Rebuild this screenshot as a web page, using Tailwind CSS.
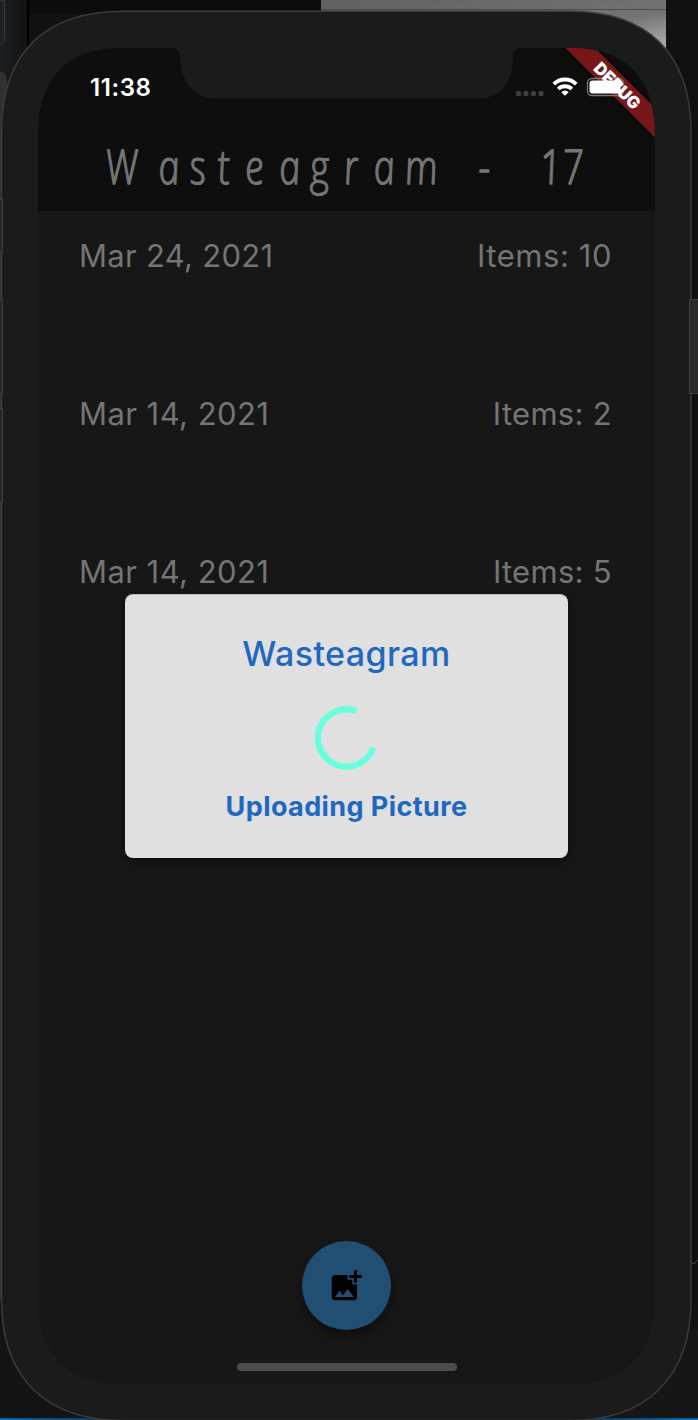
<!DOCTYPE html>
<html lang="en">
<head>
<meta charset="utf-8">
<title>Wasteagram</title>
<script src="https://cdn.jsdelivr.net/npm/@tailwindcss/browser@4"></script>
</head>
<body class="w-[698px] h-[1420px] overflow-hidden bg-[#121212] font-['Inter',sans-serif]">
<div class="relative w-[698px] h-[1420px] overflow-hidden">
  <!-- desktop and phone body -->
  <svg class="absolute inset-0" width="698" height="1420" viewBox="0 0 698 1420">
    <defs>
      <linearGradient id="gl" x1="0" x2="1"><stop offset="0" stop-color="#1c1e20"/><stop offset="1" stop-color="#111314"/></linearGradient>
      <linearGradient id="gr" x1="0" x2="1" y1="0" y2="1"><stop offset="0" stop-color="#606062"/><stop offset=".6" stop-color="#747476"/><stop offset="1" stop-color="#c4c4c4"/></linearGradient>
      <linearGradient id="blL" x1="0" x2="1"><stop offset="0" stop-color="#0866ad"/><stop offset="1" stop-color="#07365b"/></linearGradient>
      <linearGradient id="blR" x1="0" x2="1"><stop offset="0" stop-color="#07365b"/><stop offset="1" stop-color="#0866ad"/></linearGradient>
    </defs>
    <rect width="698" height="1420" fill="#111"/>
    <rect width="27" height="200" fill="url(#gl)"/>
    <path d="M0 0H4.500V38Q4.500 43 0 45" fill="#202122" stroke="#393a3b"/>
    <path d="M0 71Q7 73 7 81V130H0Z" fill="#303132"/>
    <rect x="27" width="2" height="60" fill="#000"/>
    <rect x="29" width="292" height="14" fill="#0c0c0c"/>
    <rect x="321" width="345" height="60" fill="url(#gr)"/>
    <rect x="321" y="9" width="345" height="1" fill="#4c4c4d"/>
    <rect x="666" width="32" height="300" fill="#111"/>
    <path d="M690 1264Q696 1264 698 1260" fill="none" stroke="#444"/>
    <rect y="1330" width="120" height="90" fill="#141414"/>
    <rect x="600" y="1330" width="98" height="90" fill="#161616"/>
    <rect y="1418" width="110" height="2" fill="url(#blL)"/>
    <rect x="580" y="1418" width="118" height="2" fill="url(#blR)"/>
    <rect y="130" width="2" height="1170" fill="#303030"/>
    <path d="M1.500 132C1.500 52 46 11.200 123 11.200H570C646 11.200 691 52 691 132V1300C691 1378 646 1420.500 570 1420.500H123C46 1420.500 1.500 1378 1.500 1300Z" fill="#1b1b1b" stroke="#3b3b3b" stroke-width="1.500"/>
    <g fill="#282828" stroke="#404040">
      <path d="M0 199.500H2.500V252.500H0"/><path d="M0 299.500H2.500V393.500H0"/><path d="M0 408.500H2.500V502.500H0"/>
      <rect x="689.500" y="299.500" width="10" height="94"/>
    </g>
    <!-- screen -->
    <path d="M38 135C38 78 68 48 120 48H573C625 48 655 78 655 135V1300C655 1353 625 1384 573 1384H120C68 1384 38 1353 38 1300Z" fill="#171717"/>
    <path d="M38 211V135C38 78 68 48 120 48H573C625 48 655 78 655 135V211Z" fill="#0e0e0e"/>
    <path d="M170 47.500C177 48 180 51 180.500 57C181 83 194 98.500 216 98.500H478C500 98.500 512.500 83 513 57C513 51 516 48 523 47.500Z" fill="#1b1b1b"/>
  </svg>

  <div class="relative flex flex-col w-[617px] h-[1336px] ml-[38px] mt-[48px]">
    <header class="flex flex-col h-[163px] shrink-0">
      <div class="flex h-[80px] justify-between pt-[25px] pl-[52px]">
        <time class="text-white text-[24px] leading-[30px] font-semibold tracking-[0.6px]">11:38</time>
      </div>
      <svg class="block" width="617" height="83" viewBox="38 128 617 83">
        <g fill="#757575" stroke="#757575" stroke-width="1.300" stroke-linejoin="round" font-family="'Open Sans'" font-weight="300" font-style="italic" font-size="48" transform="translate(0 184) scale(.8 1) skewX(9)">
          <text x="134 200 239 274 308 351 389 432 469 508 560 600 640 677 706" y="0" xml:space="preserve">Wasteagram - 17</text>
        </g>
      </svg>
    </header>
    <main class="flex flex-col pl-[41px] pr-[43px] pt-[25px] text-[#757575] text-[31px] leading-[40px]">
      <div class="flex justify-between h-[158px]"><span class="tracking-[0.3px]">Mar 24, 2021</span><span class="tracking-[0.55px]">Items: 10</span></div>
      <div class="flex justify-between h-[158px]"><span class="tracking-[0.45px]">Mar 14, 2021</span><span class="tracking-[0.3px]">Items: 2</span></div>
      <div class="flex justify-between h-[158px]"><span class="tracking-[0.45px]">Mar 14, 2021</span><span class="tracking-[0.3px]">Items: 5</span></div>
    </main>
    <footer class="mt-auto flex flex-col items-center pb-[13px]">
      <button class="flex items-center justify-center w-[89px] h-[89px] pr-[1px] rounded-full bg-[#214f73] shadow-[0_6px_12px_rgba(0,0,0,0.4)]">
        <svg width="38" height="38" viewBox="0 0 24 24"><path d="M19 7v2.990s-1.990.010-2 0V7h-3s.010-1.990 0-2h3V2h2v3h3v2h-3zm-3 4V8h-3V5H5c-1.100 0-2 .900-2 2v12c0 1.100.900 2 2 2h12c1.100 0 2-.900 2-2v-8h-3zM5 19l3-4 2 3 3-4 4 5H5z"/></svg>
      </button>
      <div class="mt-[33px] w-[220px] h-[8px] rounded-full bg-[#4c4c4c]"></div>
    </footer>
  </div>

  <!-- debug ribbon and status icons -->
  <svg class="absolute left-[500px] top-[40px]" width="170" height="110" viewBox="500 40 170 110">
    <defs><clipPath id="sc"><path d="M38 135C38 78 68 48 120 48H573C625 48 655 78 655 135V1300H38Z"/></clipPath></defs>
    <g clip-path="url(#sc)"><path d="M564.500 47L655 137.500V108L594 47Z" fill="#771719" style="filter:drop-shadow(0 0 5px #0009)"/></g>
    <g fill="#404040"><rect x="516" y="91" width="5" height="5" rx="1.500"/><rect x="523.500" y="91" width="5" height="5" rx="1.500"/><rect x="531" y="91" width="5" height="5" rx="1.500"/><rect x="538.500" y="91" width="5" height="5" rx="1.500"/></g>
    <g fill="none" stroke="#fff" stroke-width="3.800"><path d="M553.800 84.200A15.700 15.700 0 0 1 576.200 84.200"/><path d="M558.200 89A9.800 9.800 0 0 1 571.800 89"/></g>
    <path d="M565 95.800L561.300 92.200Q565 89 568.700 92.200Z" fill="#fff"/>
    <rect x="587.500" y="78.500" width="36" height="17" rx="4.500" fill="none" stroke="#777" stroke-width="1.300"/>
    <text transform="translate(617.500 85.500) rotate(45)" text-anchor="middle" y="6.500" fill="#fff" font-family="Inter" font-weight="900" font-size="17" textLength="58" lengthAdjust="spacingAndGlyphs">DEBUG</text>
    <rect x="589.500" y="80.500" width="31" height="13" rx="3" fill="#fff"/>
  </svg>

  <!-- upload dialog -->
  <div class="absolute left-[125px] top-[594px] w-[443px] h-[264px] rounded-[8px] bg-[#e0e0e0] border-t border-[#bbb] flex flex-col items-center text-[#1f68c0] shadow-[0_3px_8px_rgba(0,0,0,0.5)]">
    <h2 class="mt-[38px] text-[34px] leading-[42px] font-medium tracking-[0.4px]">Wasteagram</h2>
    <svg class="mt-[31px]" width="64" height="64" viewBox="-31.500 -32 64 64"><path d="M9.800 -26.900A28.600 28.600 0 1 0 27 9.500" fill="none" stroke="#69ffdc" stroke-width="6.400"/></svg>
    <p class="mt-[19px] text-[27px] leading-[36px] font-bold tracking-[0.4px]">Uploading Picture</p>
  </div>
</div>
</body>
</html>
